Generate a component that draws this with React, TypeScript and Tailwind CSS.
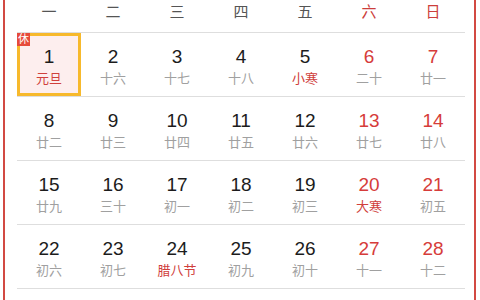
const weekdays = ["一", "二", "三", "四", "五", "六", "日"];

type Day = { n: number; lunar: string; festival?: boolean; rest?: boolean };

const weeks: Day[][] = [
  [
    { n: 1, lunar: "元旦", festival: true, rest: true },
    { n: 2, lunar: "十六" },
    { n: 3, lunar: "十七" },
    { n: 4, lunar: "十八" },
    { n: 5, lunar: "小寒", festival: true },
    { n: 6, lunar: "二十" },
    { n: 7, lunar: "廿一" },
  ],
  [
    { n: 8, lunar: "廿二" },
    { n: 9, lunar: "廿三" },
    { n: 10, lunar: "廿四" },
    { n: 11, lunar: "廿五" },
    { n: 12, lunar: "廿六" },
    { n: 13, lunar: "廿七" },
    { n: 14, lunar: "廿八" },
  ],
  [
    { n: 15, lunar: "廿九" },
    { n: 16, lunar: "三十" },
    { n: 17, lunar: "初一" },
    { n: 18, lunar: "初二" },
    { n: 19, lunar: "初三" },
    { n: 20, lunar: "大寒", festival: true },
    { n: 21, lunar: "初五" },
  ],
  [
    { n: 22, lunar: "初六" },
    { n: 23, lunar: "初七" },
    { n: 24, lunar: "腊八节", festival: true },
    { n: 25, lunar: "初九" },
    { n: 26, lunar: "初十" },
    { n: 27, lunar: "十一" },
    { n: 28, lunar: "十二" },
  ],
];

function DayCell({ day, col }: { day: Day; col: number }) {
  const weekend = col >= 5;
  const selected = day.rest;
  return (
    <div
      className={
        selected
          ? "relative flex flex-col items-center border-[3px] border-[#f7b92c] bg-[#fdeeee] pt-[11px]"
          : "relative flex flex-col items-center pt-[14px]"
      }
    >
      {day.rest && (
        <div className="absolute left-[-3px] top-[-3px] flex h-[13px] w-[13px] items-center justify-center bg-[#e64a3b] text-[11px] leading-none text-white">
          休
        </div>
      )}
      <div
        className={
          weekend
            ? "text-[19px] leading-[20px] text-[#d63c3a]"
            : "text-[19px] leading-[20px] text-[#1c1c1c]"
        }
      >
        {day.n}
      </div>
      <div
        className={
          day.festival
            ? "mt-[3px] text-[13px] leading-[17px] text-[#d0403c]"
            : "mt-[3px] text-[13px] leading-[17px] text-[#a0a0a0]"
        }
      >
        {day.lunar}
      </div>
    </div>
  );
}

export default function App() {
  return (
    <div
      className="h-[300px] w-[480px] overflow-hidden bg-white"
      style={{ fontFamily: '"Liberation Sans", "Noto Sans CJK SC", sans-serif' }}
    >
      <div className="ml-[3px] mr-[4px] h-full border-x-2 border-[#d24a43] pl-[12px] pr-[9px]">
        <div className="grid h-[32px] grid-cols-7 pb-[8px]">
          {weekdays.map((w, i) => (
            <div
              key={w}
              className={
                i >= 5
                  ? "flex items-center justify-center text-[15px] text-[#cc3e3b]"
                  : "flex items-center justify-center text-[15px] text-[#555]"
              }
            >
              {w}
            </div>
          ))}
        </div>
        {weeks.map((week, r) => (
          <div key={r} className="grid h-[64px] grid-cols-7 border-t border-[#dedede]">
            {week.map((d, c) => (
              <DayCell key={c} day={d} col={c} />
            ))}
          </div>
        ))}
        <div className="border-t border-[#dedede]" />
      </div>
    </div>
  );
}
